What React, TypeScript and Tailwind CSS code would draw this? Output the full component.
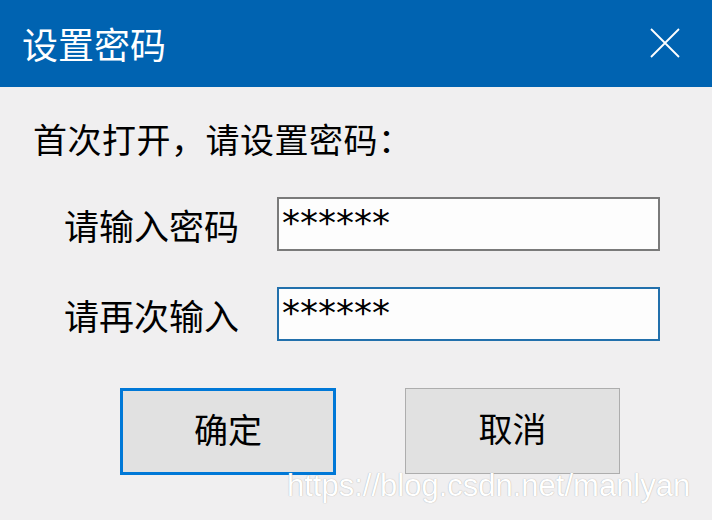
import { useState } from "react";

const cjk = "font-['Noto_Sans_CJK_SC',sans-serif]";

function CloseIcon() {
  return (
    <svg width="30" height="30" viewBox="0 0 30 30" fill="none" aria-hidden>
      <path d="M1 1L29 29M29 1L1 29" stroke="white" strokeWidth="1.8" />
    </svg>
  );
}

function PasswordRow({
  label,
  value,
  focused,
}: {
  label: string;
  value: string;
  focused?: boolean;
}) {
  return (
    <div className="flex items-center">
      <span className={`${cjk} w-[213px] text-[35px] leading-none text-black`}>{label}</span>
      <input
        readOnly
        value={value}
        className={
          focused
            ? "h-[54px] w-[383px] border-2 border-[#2270ac] bg-[#fdfdfd] pb-[3px] pl-[3px] font-['DejaVu_Sans',sans-serif] text-[36px] leading-none text-black outline-none"
            : "h-[54px] w-[383px] border-2 border-[#7a7a7a] bg-[#fdfdfd] pb-[3px] pl-[3px] font-['DejaVu_Sans',sans-serif] text-[36px] leading-none text-black outline-none"
        }
      />
    </div>
  );
}

export default function App() {
  const [first] = useState("******");
  const [second] = useState("******");

  return (
    <div className="relative h-[520px] w-[712px] overflow-hidden bg-[#f0eff0]">
      <div className="flex h-[87px] items-center justify-between bg-[#0063b1] pb-[2px] pl-[22px] pr-[32px]">
        <span className={`${cjk} text-[36px] leading-none text-white`}>设置密码</span>
        <CloseIcon />
      </div>

      <div className="pl-[33px]">
        <p className={`${cjk} mt-[35px] text-[34px] leading-none tracking-[0.5px] text-black`}>
          首次打开，请设置密码：
        </p>

        <div className="mt-[41px] flex flex-col gap-[36px] pl-[31px]">
          <PasswordRow label="请输入密码" value={first} />
          <PasswordRow label="请再次输入" value={second} focused />
        </div>

        <div className="mt-[47px] flex gap-[69px] pl-[87px]">
          <button
            type="button"
            className={`${cjk} h-[87px] w-[216px] border-[3px] border-[#0078d7] bg-[#e1e1e1] pb-[6px] text-[34px] leading-none text-black`}
          >
            确定
          </button>
          <button
            type="button"
            className={`${cjk} h-[86px] w-[215px] border border-[#adadad] bg-[#e1e1e1] pb-[6px] text-[34px] leading-none text-black`}
          >
            取消
          </button>
        </div>
      </div>

      <span className="pointer-events-none absolute left-[287px] top-[470px] font-['Liberation_Sans',sans-serif] text-[31px] leading-none text-white [text-shadow:0_0_1px_#9a9a9a]">
        https://blog.csdn.net/manlyan
      </span>
    </div>
  );
}
